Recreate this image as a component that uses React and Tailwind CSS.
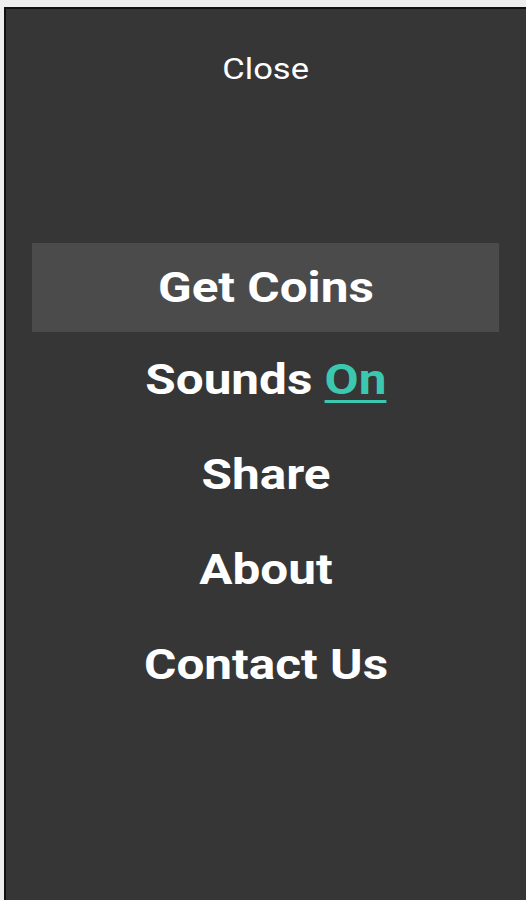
export default function App() {
  const t = "text-white font-bold text-[43px] leading-none inline-block scale-x-[1.15]";
  return (
    <div className="w-[526px] h-[900px] bg-[#ededed] pt-[7px] pl-[4px] overflow-hidden" style={{ fontFamily: "Roboto, 'Noto Sans', sans-serif" }}>
      <div className="w-full h-full border-t-2 border-l-2 border-[#111] bg-[#363636] flex flex-col">
        <div className="h-[120px] flex items-center justify-center">
          <span className="text-white text-[30px] leading-none inline-block scale-x-[1.15]">Close</span>
        </div>
        <div className="h-[114px]" />
        <div className="flex flex-col items-stretch">
          <div className="ml-[26px] mr-[27px] h-[89px] bg-[#4b4b4b] flex items-center justify-center">
            <span className={t}>Get Coins</span>
          </div>
          <div className="h-[95px] flex items-center justify-center">
            <span className={t}>
              Sounds <span className="text-[#3cc8b0] underline decoration-[3px] underline-offset-[6px]">On</span>
            </span>
          </div>
          <div className="h-[95px] flex items-center justify-center">
            <span className={t}>Share</span>
          </div>
          <div className="h-[95px] flex items-center justify-center">
            <span className={t}>About</span>
          </div>
          <div className="h-[95px] flex items-center justify-center">
            <span className={t}>Contact Us</span>
          </div>
        </div>
      </div>
    </div>
  );
}
